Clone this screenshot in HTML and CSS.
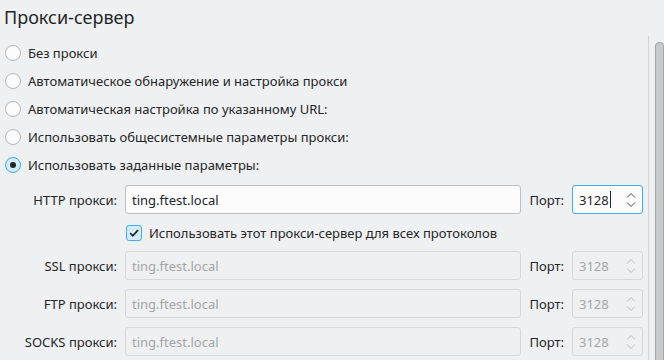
FILE: index.html
```html
<!DOCTYPE html>
<html lang="ru">
<head>
<meta charset="utf-8">
<link rel="stylesheet" href="styles.css">
</head>
<body>
<div class="page">
  <h1 class="title">Прокси-сервер</h1>
  <div class="body">
    <div class="form">
      <div class="radios">
        <label class="radio-row"><span class="radio"></span>Без прокси</label>
        <label class="radio-row"><span class="radio"></span>Автоматическое обнаружение и настройка прокси</label>
        <label class="radio-row"><span class="radio"></span>Автоматическая настройка по указанному URL:</label>
        <label class="radio-row"><span class="radio"></span>Использовать общесистемные параметры прокси:</label>
        <label class="radio-row"><span class="radio checked"></span>Использовать заданные параметры:</label>
      </div>
      <div class="grid">
        <div class="lbl">HTTP прокси:</div>
        <div class="field">ting.ftest.local</div>
        <div class="lbl">Порт:</div>
        <div class="spin focus"><span class="val">3128<span class="caret"></span></span>
          <svg class="arrows" width="10" height="16" viewBox="0 0 10 16"><path d="M1 5.5 L5 1.5 L9 5.5 M1 10.5 L5 14.5 L9 10.5" fill="none" stroke="currentColor" stroke-width="1"/></svg>
        </div>

        <div class="check-row"><span class="checkbox"><svg width="12" height="12" viewBox="0 0 12 12"><path d="M2.2 6.2 L4.8 8.8 L10 3.2" fill="none" stroke="#232627" stroke-width="1.8"/></svg></span>Использовать этот прокси-сервер для всех протоколов</div>

        <div class="lbl">SSL прокси:</div>
        <div class="field disabled">ting.ftest.local</div>
        <div class="lbl">Порт:</div>
        <div class="spin disabled"><span class="val">3128</span>
          <svg class="arrows" width="10" height="16" viewBox="0 0 10 16"><path d="M1 5.5 L5 1.5 L9 5.5 M1 10.5 L5 14.5 L9 10.5" fill="none" stroke="currentColor" stroke-width="1"/></svg>
        </div>

        <div class="lbl">FTP прокси:</div>
        <div class="field disabled">ting.ftest.local</div>
        <div class="lbl">Порт:</div>
        <div class="spin disabled"><span class="val">3128</span>
          <svg class="arrows" width="10" height="16" viewBox="0 0 10 16"><path d="M1 5.5 L5 1.5 L9 5.5 M1 10.5 L5 14.5 L9 10.5" fill="none" stroke="currentColor" stroke-width="1"/></svg>
        </div>

        <div class="lbl">SOCKS прокси:</div>
        <div class="field disabled">ting.ftest.local</div>
        <div class="lbl">Порт:</div>
        <div class="spin disabled"><span class="val">3128</span>
          <svg class="arrows" width="10" height="16" viewBox="0 0 10 16"><path d="M1 5.5 L5 1.5 L9 5.5 M1 10.5 L5 14.5 L9 10.5" fill="none" stroke="currentColor" stroke-width="1"/></svg>
        </div>
      </div>
    </div>
    <div class="scroll"><div class="handle"></div></div>
  </div>
</div>
</body>
</html>
```
FILE: styles.css
```css
html, body {
  margin: 0;
  padding: 0;
  background: #eff0f1;
}
body {
  width: 664px;
  height: 360px;
  overflow: hidden;
  font-family: "Noto Sans", "DejaVu Sans", sans-serif;
  font-size: 13px;
  color: #232627;
}
.page {
  display: flex;
  flex-direction: column;
  height: 360px;
  overflow: hidden;
}
.title {
  margin: 0;
  height: 36px;
  box-sizing: border-box;
  padding: 3px 0 0 4px;
  font-size: 18px;
  font-weight: normal;
  line-height: 28px;
  flex: none;
}
.body {
  flex: 1;
  display: flex;
  min-height: 0;
  overflow: hidden;
}
.form {
  flex: 1;
  padding-top: 3px;
  padding-right: 5px;
}
.radios {
  display: flex;
  flex-direction: column;
}
.radio-row {
  height: 28px;
  display: flex;
  align-items: center;
  gap: 7px;
  padding-left: 5px;
}
.radio {
  width: 16px;
  height: 16px;
  box-sizing: border-box;
  border-radius: 50%;
  border: 1px solid #b4b6b8;
  background: #fcfcfc;
  flex: none;
  position: relative;
}
.radio.checked {
  border-color: #3daee9;
  background: #d4ebf8;
}
.radio.checked::after {
  content: "";
  position: absolute;
  left: 4px;
  top: 4px;
  width: 6px;
  height: 6px;
  border-radius: 50%;
  background: #232627;
}
.grid {
  margin-top: 6px;
  display: grid;
  grid-template-columns: 117px 1fr auto 71px;
  column-gap: 8px;
  row-gap: 9px;
  align-items: center;
}
.lbl {
  text-align: right;
  white-space: nowrap;
}
.field, .spin {
  height: 29px;
  box-sizing: border-box;
  border: 1px solid #bcbec0;
  border-radius: 3px;
  background: #fcfcfc;
  display: flex;
  align-items: center;
  padding-left: 6px;
}
.field.disabled, .spin.disabled {
  background: #eff0f1;
  border-color: #d6d7d8;
  color: #a4a6a8;
}
.spin {
  justify-content: space-between;
  padding-right: 6px;
  color: #232627;
}
.spin.focus {
  border-color: #3daee9;
}
.spin .val {
  display: flex;
  align-items: center;
}
.caret {
  display: inline-block;
  width: 1px;
  height: 17px;
  background: #232627;
  margin-left: 1px;
}
.arrows {
  color: #4d4f51;
}
.spin.disabled .arrows {
  color: #b8babc;
}
.check-row {
  grid-column: 2 / 5;
  display: flex;
  align-items: center;
  gap: 7px;
  height: 19px;
  padding-left: 1px;
}
.checkbox {
  width: 16px;
  height: 16px;
  box-sizing: border-box;
  border: 1px solid #3daee9;
  border-radius: 3px;
  background: #d4ebf8;
  display: flex;
  align-items: center;
  justify-content: center;
  flex: none;
}
.checkbox svg { display: block; }
.scroll {
  width: 16px;
  flex: none;
  box-sizing: border-box;
  border-left: 1px solid #d2d3d4;
  padding: 6px 0 0 6px;
  overflow: hidden;
}
.handle {
  width: 9px;
  height: 400px;
  box-sizing: border-box;
  border: 1px solid #a3a5a7;
  border-bottom: none;
  border-radius: 5px 5px 0 0;
  background: #c8c9ca;
}
```
